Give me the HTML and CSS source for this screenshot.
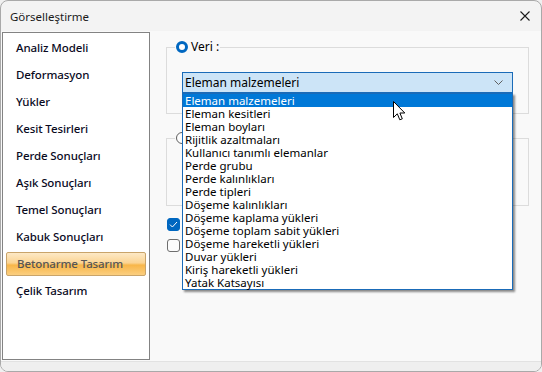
FILE: index.html
```html
<!DOCTYPE html>
<html>

<head>
    <meta charset="UTF-8">
    <title>Görselleştirme</title>
    <link rel="stylesheet" href="styles.css">
</head>

<body>
    <div class="window">
        <div class="titlebar">
            <span class="title">Görselleştirme</span>
            <svg class="close" width="10" height="10" viewBox="0 0 10 10">
                <path d="M0.5 0.5 L9.5 9.5 M9.5 0.5 L0.5 9.5" stroke="#1b1b1b" stroke-width="1.1" fill="none" />
            </svg>
        </div>

        <div class="content">
            <ul class="nav">
                <li>Analiz Modeli</li>
                <li>Deformasyon</li>
                <li>Yükler</li>
                <li>Kesit Tesirleri</li>
                <li>Perde Sonuçları</li>
                <li>Aşık Sonuçları</li>
                <li>Temel Sonuçları</li>
                <li>Kabuk Sonuçları</li>
                <li class="active"><span>Betonarme Tasarım</span></li>
                <li>Çelik Tasarım</li>
            </ul>

            <div class="panel">
                <fieldset class="group group-data">
                    <legend><span class="radio on"></span>Veri :</legend>
                    <div class="combo">
                        <span class="combo-value">Eleman malzemeleri</span>
                        <svg class="chevron" width="9" height="5" viewBox="0 0 9 5">
                            <path d="M0.5 0.5 L4.5 4.5 L8.5 0.5" stroke="#5f5f5f" stroke-width="1" fill="none" />
                        </svg>
                        <ul class="dropdown">
                            <li class="selected">Eleman malzemeleri</li>
                            <li>Eleman kesitleri</li>
                            <li>Eleman boyları</li>
                            <li>Rijitlik azaltmaları</li>
                            <li>Kullanıcı tanımlı elemanlar</li>
                            <li>Perde grubu</li>
                            <li>Perde kalınlıkları</li>
                            <li>Perde tipleri</li>
                            <li>Döşeme kalınlıkları</li>
                            <li>Döşeme kaplama yükleri</li>
                            <li>Döşeme toplam sabit yükleri</li>
                            <li>Döşeme hareketli yükleri</li>
                            <li>Duvar yükleri</li>
                            <li>Kiriş hareketli yükleri</li>
                            <li>Yatak Katsayısı</li>
                        </ul>
                    </div>
                </fieldset>

                <fieldset class="group group-other">
                    <legend><span class="radio"></span></legend>
                </fieldset>

                <div class="checks">
                    <span class="check on">
                        <svg width="9" height="7" viewBox="0 0 9 7">
                            <path d="M1 3.6 L3.4 6 L8 1" stroke="#ffffff" stroke-width="1" fill="none" />
                        </svg>
                    </span>
                    <span class="check"></span>
                </div>
            </div>
        </div>

        <div class="footer"></div>

        <svg class="cursor" width="13" height="20" viewBox="0 0 13 20">
            <path d="M0.5 0.5 L0.5 16.5 L4.3 12.8 L6.8 18.8 L9.3 17.8 L6.9 12 L11.8 12 Z" fill="#ffffff" stroke="#000000" stroke-width="1" stroke-linejoin="miter" />
        </svg>
    </div>
</body>

</html>
```

FILE: styles.css
```css
* {
    box-sizing: border-box;
}

body {
    margin: 0;
    padding: 0;
    width: 542px;
    height: 372px;
    background: #f0f0f0;
    font-family: "Noto Sans", "Liberation Sans", sans-serif;
    font-size: 12px;
    color: #000;
}

.window {
    position: relative;
    width: 542px;
    height: 372px;
    border: 1px solid #a9a9a9;
    border-radius: 8px;
    background: #f3f3f3;
    overflow: hidden;
}

.titlebar {
    height: 30px;
    display: flex;
    align-items: center;
    justify-content: space-between;
    padding: 0 10px 0 9px;
}

.title {
    font-size: 11.5px;
    color: #1a1a1a;
}

.close {
    margin-right: 1px;
}

.content {
    display: flex;
    height: 331px;
    background: #f9f9f9;
    border-bottom: 1px solid #e2e2e2;
}

.nav {
    list-style: none;
    margin: 1px 0 0 1px;
    padding: 1px 2px 0 2px;
    width: 148px;
    height: 328px;
    background: #ffffff;
    border: 1px solid #838383;
}

.nav li {
    height: 27px;
    line-height: 27px;
    padding-left: 11px;
    font-size: 11.5px;
    font-weight: 500;
    letter-spacing: -0.1px;
    color: #0a0a1e;
    white-space: nowrap;
}

.nav li.active {
    padding: 2px 0 1px 0;
    line-height: normal;
}

.nav li.active span {
    display: block;
    height: 24px;
    line-height: 22px;
    padding-left: 10px;
    margin: 0 1px;
    color: #555555;
    border: 1px solid #c9a46a;
    border-radius: 2px;
    background: linear-gradient(#fde9c6 0%, #fbd493 45%, #f8b649 55%, #fbcf80 100%);
}

.panel {
    padding: 9px 0 0 16px;
}

.group {
    width: 363px;
    margin: 0;
    border: 1px solid #dcdcdc;
    padding: 18px 8px 20px 8px;
}

.group legend {
    display: flex;
    align-items: center;
    gap: 3px;
    height: 14px;
    padding: 0 1px;
    line-height: 14px;
}

.radio {
    display: inline-block;
    width: 12px;
    height: 12px;
    border-radius: 50%;
    border: 1px solid #5e5e5e;
    background: #fdfdfd;
}

.radio.on {
    border: 3.5px solid #0067c0;
    background: #ffffff;
}

.combo {
    position: relative;
    margin: 0 7px;
    height: 21px;
    display: flex;
    align-items: center;
    justify-content: space-between;
    padding: 0 9px 0 2px;
    background: #cce4f7;
    border: 1px solid #1a6bb8;
}

.dropdown {
    position: absolute;
    left: -1px;
    right: -1px;
    top: calc(100% + 1px);
    margin: 0;
    padding: 0;
    list-style: none;
    background: #ffffff;
    border: 1px solid #1a6bb8;
    box-shadow: 2px 2px 2px rgba(0, 0, 0, 0.45);
    z-index: 2;
}

.dropdown li {
    height: 13px;
    line-height: 13px;
    padding-left: 2px;
    font-size: 11.5px;
    white-space: nowrap;
}

.dropdown li.selected {
    background: #0078d7;
    color: #ffffff;
}

.group-other {
    margin-top: 17px;
    padding: 0 8px 60px 8px;
}

.checks {
    display: flex;
    flex-direction: column;
    gap: 8px;
    margin: 12px 0 0 1px;
}

.check {
    display: flex;
    align-items: center;
    justify-content: center;
    width: 13px;
    height: 13px;
    border-radius: 3px;
    border: 1px solid #6e6e6e;
    background: #fbfbfb;
}

.check.on {
    border-color: #0067c0;
    background: #0067c0;
}

.footer {
    height: 9px;
    background: #efefef;
}

.cursor {
    position: absolute;
    left: 392px;
    top: 100px;
    z-index: 5;
}
```
